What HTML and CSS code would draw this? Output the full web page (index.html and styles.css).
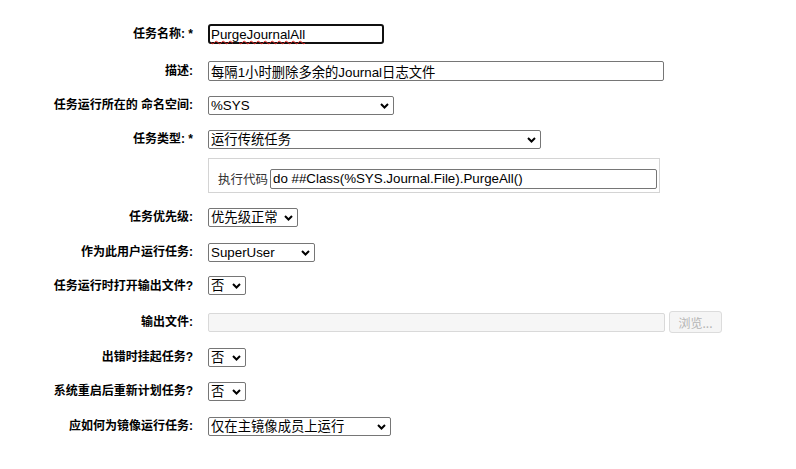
FILE: index.html
```html
<!DOCTYPE html>
<html lang="zh">
<head>
<meta charset="utf-8">
<title>任务</title>
<link rel="stylesheet" href="styles.css">
</head>
<body>
<form class="form">
  <label class="lbl r1">任务名称: *</label>
  <div class="ctl r1"><span class="namewrap"><input class="txt name" type="text" value="PurgeJournalAll"><span class="squiggle" aria-hidden="true">PurgeJournalAll</span></span></div>

  <label class="lbl r2">描述:</label>
  <div class="ctl r2"><input class="txt desc" type="text" value="每隔1小时删除多余的Journal日志文件"></div>

  <label class="lbl r3">任务运行所在的 命名空间:</label>
  <div class="ctl r3"><span class="sel w-ns"><select><option>%SYS</option></select><svg class="chev" viewBox="0 0 9 6"><path d="M1 1L4.5 4.5L8 1"/></svg></span></div>

  <label class="lbl r4">任务类型: *</label>
  <div class="ctl r4"><span class="sel w-type"><select><option>运行传统任务</option></select><svg class="chev" viewBox="0 0 9 6"><path d="M1 1L4.5 4.5L8 1"/></svg></span></div>

  <div class="lbl r5"></div>
  <div class="ctl r5">
    <div class="codebox"><span class="codelbl">执行代码</span><input class="txt code" type="text" value="do ##Class(%SYS.Journal.File).PurgeAll()"></div>
  </div>

  <label class="lbl r6">任务优先级:</label>
  <div class="ctl r6"><span class="sel w-pri"><select><option>优先级正常</option></select><svg class="chev" viewBox="0 0 9 6"><path d="M1 1L4.5 4.5L8 1"/></svg></span></div>

  <label class="lbl r7">作为此用户运行任务:</label>
  <div class="ctl r7"><span class="sel w-user"><select><option>SuperUser</option></select><svg class="chev" viewBox="0 0 9 6"><path d="M1 1L4.5 4.5L8 1"/></svg></span></div>

  <label class="lbl r8">任务运行时打开输出文件?</label>
  <div class="ctl r8"><span class="sel w-no"><select><option>否</option></select><svg class="chev" viewBox="0 0 9 6"><path d="M1 1L4.5 4.5L8 1"/></svg></span></div>

  <label class="lbl r9">输出文件:</label>
  <div class="ctl r9"><input class="txt out" type="text" disabled><button class="browse" type="button" disabled>浏览...</button></div>

  <label class="lbl r10">出错时挂起任务?</label>
  <div class="ctl r10"><span class="sel w-no"><select><option>否</option></select><svg class="chev" viewBox="0 0 9 6"><path d="M1 1L4.5 4.5L8 1"/></svg></span></div>

  <label class="lbl r11">系统重启后重新计划任务?</label>
  <div class="ctl r11"><span class="sel w-no"><select><option>否</option></select><svg class="chev" viewBox="0 0 9 6"><path d="M1 1L4.5 4.5L8 1"/></svg></span></div>

  <label class="lbl r12">应如何为镜像运行任务:</label>
  <div class="ctl r12"><span class="sel w-mir"><select><option>仅在主镜像成员上运行</option></select><svg class="chev" viewBox="0 0 9 6"><path d="M1 1L4.5 4.5L8 1"/></svg></span></div>
</form>
</body>
</html>
```
FILE: styles.css
```css
html, body {
  margin: 0;
  padding: 0;
  background: #fff;
}
.form {
  display: grid;
  grid-template-columns: 193px 1fr;
  column-gap: 15px;
  grid-template-rows: 36px 38px 30px 38px 34px 50px 20px 47px 26px 44px 24px 46px;
  padding-top: 16px;
  align-items: center;
}
.lbl {
  text-align: right;
  font-family: "Liberation Sans", "Noto Sans CJK SC", sans-serif;
  font-weight: bold;
  font-size: 12px;
  line-height: 16px;
  color: #000;
  white-space: nowrap;
}
.ctl {
  display: flex;
  align-items: center;
}
.txt {
  box-sizing: border-box;
  height: 20px;
  margin: 0;
  padding: 0 2px;
  border: 1px solid #767676;
  border-radius: 2px;
  font-family: "Liberation Sans", "Noto Sans CJK SC", sans-serif;
  font-size: 13.33px;
  color: #000;
  background: #fff;
  outline: none;
}
.namewrap {
  position: relative;
  display: inline-block;
}
.name {
  width: 176px;
  border: 2px solid #101010;
  border-radius: 3px;
  padding: 0 1px;
  display: block;
}
.squiggle {
  position: absolute;
  left: 3px;
  top: 2px;
  font-family: "Liberation Sans", sans-serif;
  font-size: 13.33px;
  line-height: 16px;
  color: transparent;
  text-decoration: underline wavy #e0201c;
  text-decoration-thickness: 1px;
  text-underline-offset: 2px;
  pointer-events: none;
  white-space: nowrap;
}
.desc { width: 456px; }
.sel {
  position: relative;
  display: inline-block;
}
.sel select {
  box-sizing: border-box;
  appearance: none;
  -webkit-appearance: none;
  height: 19px;
  width: 100%;
  margin: 0;
  padding: 0 0 0 2px;
  border: 1px solid #767676;
  border-radius: 2px;
  background: #fff;
  font-family: "Liberation Sans", "Noto Sans CJK SC", sans-serif;
  font-size: 13.33px;
  line-height: 17px;
  color: #000;
  display: block;
}
.chev {
  position: absolute;
  right: 5px;
  top: 7px;
  width: 9px;
  height: 6px;
  fill: none;
  stroke: #000;
  stroke-width: 2;
  pointer-events: none;
}
.w-ns { width: 186px; }
.w-type { width: 333px; }
.w-pri { width: 90px; }
.w-user { width: 107px; }
.w-no { width: 38px; }
.w-mir { width: 183px; }
.codebox {
  box-sizing: border-box;
  width: 452px;
  height: 35px;
  border: 1px solid #d4d4d4;
  display: flex;
  align-items: center;
  padding: 7px 2px 0 9px;
  gap: 2px;
}
.codelbl {
  font-family: "Noto Sans CJK SC", sans-serif;
  font-size: 12.5px;
  line-height: 16px;
  color: #333;
  white-space: nowrap;
}
.code { width: 387px; }
.out {
  width: 457px;
  height: 19px;
  border: 1px solid #d9d9d9;
  background: #f6f6f6;
}
.browse {
  box-sizing: border-box;
  margin-left: 4px;
  width: 53px;
  height: 22px;
  padding: 0;
  border: 1px solid #dcdcdc;
  border-radius: 3px;
  background: #f5f5f5;
  color: #b4b4b4;
  font-family: "Noto Sans CJK SC", sans-serif;
  font-size: 12px;
}
```
